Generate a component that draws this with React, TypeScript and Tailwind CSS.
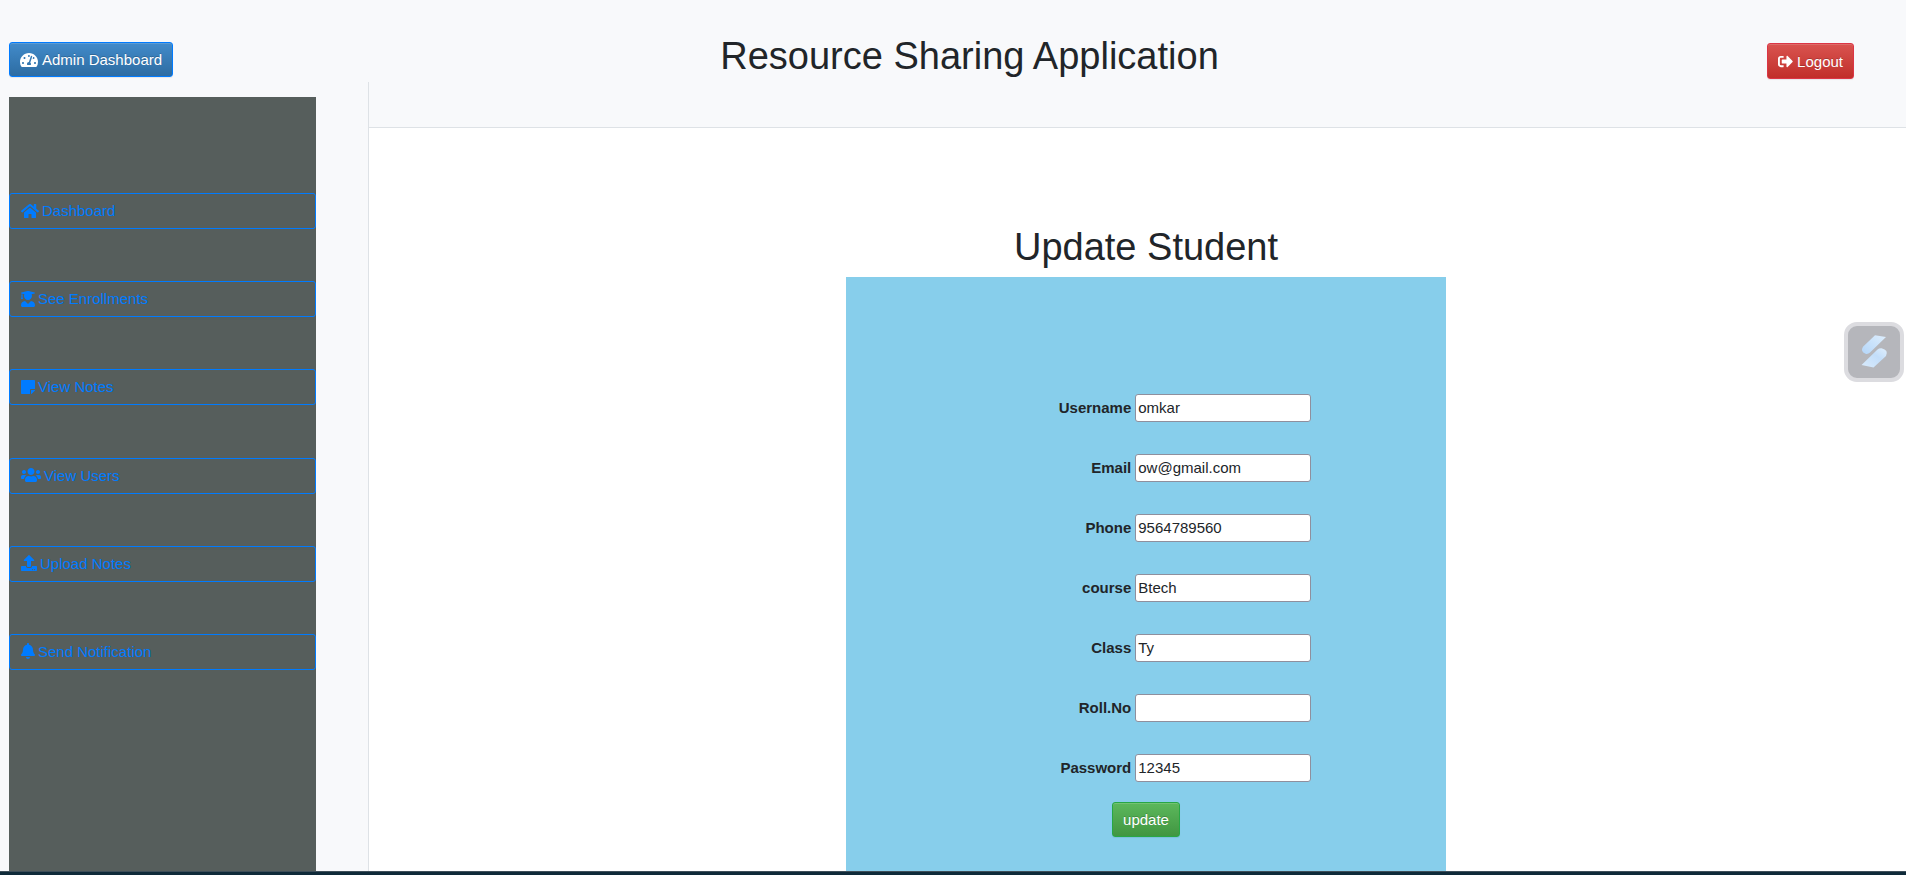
import type { IconType } from "react-icons";
import {
  FaBell,
  FaHome,
  FaSignOutAlt,
  FaStickyNote,
  FaTachometerAlt,
  FaUpload,
  FaUserGraduate,
  FaUsers,
} from "react-icons/fa";

interface NavItem {
  label: string;
  icon: IconType;
  iconClass: string;
}

const navItems: NavItem[] = [
  { label: "Dashboard", icon: FaHome, iconClass: "w-[18px]" },
  { label: "See Enrollments", icon: FaUserGraduate, iconClass: "w-[14px]" },
  { label: "View Notes", icon: FaStickyNote, iconClass: "w-[14px]" },
  { label: "View Users", icon: FaUsers, iconClass: "w-[20px]" },
  { label: "Upload Notes", icon: FaUpload, iconClass: "w-[16px]" },
  { label: "Send Notification", icon: FaBell, iconClass: "w-[14px]" },
];

const fields = [
  { id: "username", label: "Username", value: "omkar" },
  { id: "email", label: "Email", value: "ow@gmail.com" },
  { id: "phone", label: "Phone", value: "9564789560" },
  { id: "course", label: "course", value: "Btech" },
  { id: "class", label: "Class", value: "Ty" },
  { id: "rollno", label: "Roll.No", value: "" },
  { id: "password", label: "Password", value: "12345" },
];

const raised =
  "inline-flex items-center gap-1 rounded-[3px] border px-[10px] text-white [text-shadow:0_-1px_0_rgba(0,0,0,0.2)] shadow-[inset_0_1px_0_rgba(255,255,255,0.15),0_1px_1px_rgba(0,0,0,0.075)]";

function Sidebar() {
  return (
    <aside className="flex w-[369px] shrink-0 flex-col bg-[#f8f9fb]">
      <div className="flex h-[82px] items-end pb-[5px] pl-[9px]">
        <button
          type="button"
          className={`${raised} h-[35px] border-[#007bff] bg-linear-to-b from-[#428bca] to-[#2d6ca2]`}
        >
          <FaTachometerAlt className="h-4 w-[18px]" />
          Admin Dashboard
        </button>
      </div>
      <div className="flex flex-1 border-r border-[#dee2e6] pt-[15px] pl-[9px]">
        <nav className="w-[307px] bg-[#565e5c] pt-24 pb-12">
          <ul className="flex h-[477px] flex-col justify-between">
            {navItems.map(({ label, icon: Icon, iconClass }) => (
              <li key={label}>
                <a
                  href="#"
                  className="flex h-9 items-center gap-[3px] rounded-[3px] border border-[#007bff] px-[11px] pb-px text-[#007bff]"
                >
                  <Icon className={`h-4 ${iconClass}`} />
                  {label}
                </a>
              </li>
            ))}
          </ul>
        </nav>
      </div>
    </aside>
  );
}

function StudentForm() {
  return (
    <form
      className="flex w-[600px] flex-1 flex-col items-center bg-[#87ceeb] pt-[117px] pb-8"
      onSubmit={(event) => event.preventDefault()}
    >
      <div className="grid grid-cols-[auto_176px] items-center gap-x-1 gap-y-8 pl-[78px]">
        {fields.map(({ id, label, value }) => (
          <div key={id} className="contents">
            <label htmlFor={id} className="pb-px text-right font-bold">
              {label}
            </label>
            <input
              id={id}
              type="text"
              defaultValue={value}
              className="h-7 w-full rounded-[3px] border border-[#8f8f9d] bg-white px-[2px] pb-px"
            />
          </div>
        ))}
      </div>
      <button
        type="submit"
        className={`${raised} mt-5 h-[35px] border-[#28a745] bg-linear-to-b from-[#5cb85c] to-[#419641]`}
      >
        update
      </button>
    </form>
  );
}

function FloatingWidget() {
  return (
    <button
      type="button"
      aria-label="Open assistant"
      className="fixed top-[322px] right-[2px] flex size-[60px] items-center justify-center rounded-[13px] border-4 border-[#dcdce0] bg-[#b5b6bb]"
    >
      <svg viewBox="0 0 52 52" className="size-[52px] shrink-0" aria-hidden="true">
        <defs>
          <linearGradient id="upper" x1="0" y1="1" x2="1" y2="0">
            <stop offset="0" stopColor="#b4d6f9" />
            <stop offset="1" stopColor="#deeefd" />
          </linearGradient>
          <linearGradient id="lower" x1="0" y1="1" x2="1" y2="0">
            <stop offset="0" stopColor="#d9ebfc" />
            <stop offset="0.6" stopColor="#c3defa" />
            <stop offset="1" stopColor="#e0effd" />
          </linearGradient>
        </defs>
        <path
          d="M27 9.300 L38 11 L22 26.500 Q20 28.500 17.500 27.800 Q12 25.500 15 20.800 Z"
          fill="url(#upper)"
        />
        <path
          d="M13.500 39 L29.500 23.500 Q31 22 33.500 22.200 Q41 24 38 30 L25.500 41.500 Z"
          fill="url(#lower)"
        />
      </svg>
    </button>
  );
}

export default function App() {
  return (
    <div className="flex min-h-screen flex-col bg-white font-['Liberation_Sans',Arial,sans-serif] text-[15px] leading-[21px] text-[#212529]">
      <div className="flex flex-1">
        <Sidebar />
        <div className="flex min-w-0 flex-1 flex-col">
          <header className="flex h-32 items-start border-b border-[#dee2e6] bg-[#f8f9fb]">
            <h1 className="flex-1 pt-[34px] text-center text-[38px] leading-[45px]">
              Resource Sharing Application
            </h1>
            <div className="flex w-[336px] justify-end pt-[43px] pr-[52px]">
              <button
                type="button"
                className={`${raised} h-9 border-[#dc3545] bg-linear-to-b from-[#d9534f] to-[#c12e2a]`}
              >
                <FaSignOutAlt className="size-[15px]" />
                Logout
              </button>
            </div>
          </header>
          <main className="flex flex-1 flex-col items-center pt-[97px] pl-[17px]">
            <h2 className="mb-[7px] text-[38px] leading-[45px]">Update Student</h2>
            <StudentForm />
          </main>
        </div>
      </div>
      <footer className="h-1 border-t border-[#3f4f5a] bg-[#0f2a39]" />
      <FloatingWidget />
    </div>
  );
}
